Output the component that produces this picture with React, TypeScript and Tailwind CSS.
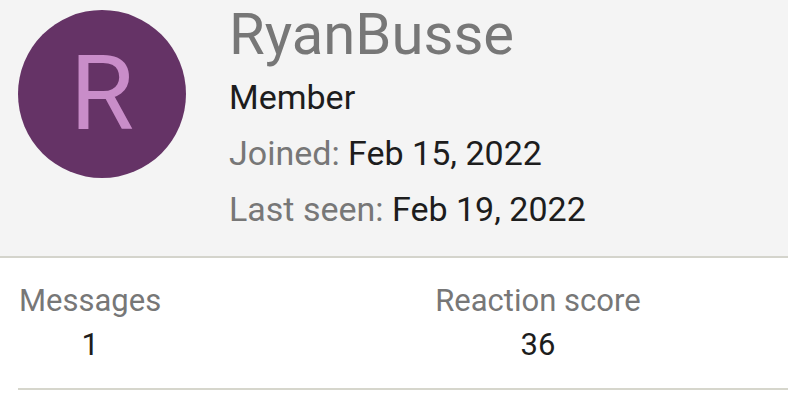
import React from "react";

export default function App() {
  return (
    <div className="w-[788px] h-[410px] bg-white overflow-hidden" style={{ fontFamily: "Roboto, 'Noto Sans', sans-serif" }}>
      <div className="h-[258px] bg-[#f4f4f4] border-b-2 border-[#d4d4cc] flex items-start">
        <div className="ml-[18px] mt-[10px] w-[168px] h-[168px] rounded-full bg-[#653366] flex items-center justify-center shrink-0">
          <span className="text-[#c98dc9] text-[104px] leading-none">R</span>
        </div>
        <div className="ml-[43px] flex flex-col">
          <div className="text-[58px] leading-[68px] text-[#777777]">RyanBusse</div>
          <div className="text-[34px] leading-[56px] text-[#1d1d1d] mt-[1px]">Member</div>
          <div className="text-[34px] leading-[56px] text-[#777777]">Joined: <span className="text-[#1d1d1d]">Feb 15, 2022</span></div>
          <div className="text-[34px] leading-[56px] text-[#777777]">Last seen: <span className="text-[#1d1d1d]">Feb 19, 2022</span></div>
        </div>
      </div>
      <div className="ml-[18px] border-b-2 border-[#d6d6cc] flex pt-[21px] pb-[21px]">
        <div className="ml-[1px] flex flex-col items-center">
          <div className="text-[31px] leading-[44px] text-[#777777]">Messages</div>
          <div className="text-[31px] leading-[44px] text-[#1d1d1d]">1</div>
        </div>
        <div className="ml-[274px] flex flex-col items-center">
          <div className="text-[31px] leading-[44px] text-[#777777]">Reaction score</div>
          <div className="text-[31px] leading-[44px] text-[#1d1d1d]">36</div>
        </div>
      </div>
    </div>
  );
}
